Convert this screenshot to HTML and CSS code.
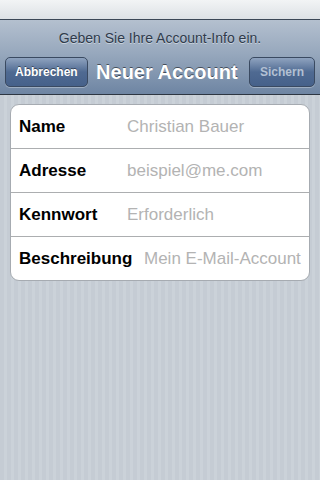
FILE: index.html
```html
<!DOCTYPE html>
<html lang="de">
<head>
  <meta charset="UTF-8">
  <meta name="viewport" content="width=device-width, initial-scale=1.0">
  <title>Neuer Account</title>
  <link rel="stylesheet" href="styles.css">
</head>
<body>
  <!-- Statusleiste -->
  <div class="status-bar"></div>

  <!-- Navigationsleiste mit Hinweis -->
  <div class="nav-bar">
    <div class="prompt">Geben Sie Ihre Account-Info ein.</div>
    <div class="nav-row">
      <button class="nav-button">Abbrechen</button>
      <div class="nav-title">Neuer Account</div>
      <button class="nav-button disabled">Sichern</button>
    </div>
  </div>

  <!-- Formular -->
  <div class="content">
    <div class="form-group">
      <div class="form-row">
        <span class="label">Name</span>
        <span class="value">Christian Bauer</span>
      </div>
      <div class="form-row">
        <span class="label">Adresse</span>
        <span class="value">beispiel@me.com</span>
      </div>
      <div class="form-row">
        <span class="label">Kennwort</span>
        <span class="value">Erforderlich</span>
      </div>
      <div class="form-row">
        <span class="label">Beschreibung</span>
        <span class="value wide">Mein E-Mail-Account</span>
      </div>
    </div>
  </div>
</body>
</html>
```

FILE: styles.css
```css
html, body {
  height: 100%;
}

body {
  margin: 0;
  font-family: "Liberation Sans", Arial, sans-serif;
  display: flex;
  flex-direction: column;
  overflow: hidden;
  background: repeating-linear-gradient(90deg, #c5ccd4 0, #c5ccd4 4px, #cbd2d9 4px, #cbd2d9 7px);
}

.status-bar {
  height: 19px;
  background: linear-gradient(#f2f4f5, #dde1e5);
  border-bottom: 1px solid #3b4756;
}

.nav-bar {
  height: 74px;
  background: linear-gradient(#b4c0cf, #97a8bd 45%, #6e85a3);
  border-bottom: 1px solid #2d3642;
  display: flex;
  flex-direction: column;
}

.prompt {
  text-align: center;
  font-size: 14px;
  color: #2f3b4c;
  text-shadow: 0 1px 0 rgba(255, 255, 255, 0.45);
  padding-top: 10px;
  height: 27px;
}

.nav-row {
  display: flex;
  align-items: center;
  justify-content: space-between;
  padding: 0 5px;
  height: 30px;
}

.nav-button {
  height: 30px;
  padding: 0 9px;
  border: 1px solid #3a4a61;
  border-radius: 5px;
  background: linear-gradient(#8fa3bf, #4f6a92 50%, #46618a);
  color: white;
  font-family: "Liberation Sans", Arial, sans-serif;
  font-weight: bold;
  font-size: 12px;
  text-shadow: 0 -1px 0 rgba(0, 0, 0, 0.45);
  box-shadow: 0 1px 0 rgba(255, 255, 255, 0.3);
}

.nav-button.disabled {
  color: #b3c0d3;
  text-shadow: none;
  padding: 0 10px;
}

.nav-title {
  color: white;
  font-weight: bold;
  font-size: 20px;
  text-shadow: 0 -1px 0 rgba(0, 0, 0, 0.5);
  padding-right: 3px;
}

.content {
  padding: 9px 10px;
}

.form-group {
  background: white;
  border: 1px solid #a6abb1;
  border-radius: 9px;
  overflow: hidden;
}

.form-row {
  display: flex;
  align-items: center;
  height: 43px;
  border-bottom: 1px solid #acaeb0;
  font-size: 17px;
}

.form-row:last-child {
  border-bottom: none;
}

.label {
  font-weight: bold;
  color: black;
  width: 108px;
  padding-left: 8px;
}

.value {
  color: #b3b3b3;
}

.value.wide {
  margin-left: 17px;
}
```
